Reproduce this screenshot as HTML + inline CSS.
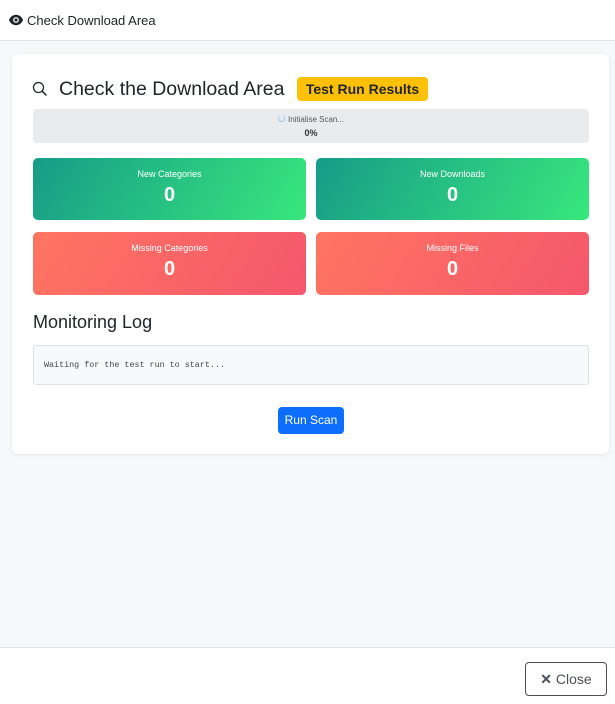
<!DOCTYPE html>
<html><head><meta charset="utf-8"><style>
*{box-sizing:border-box;margin:0;padding:0}
body{width:615px;height:704px;font-family:"Liberation Sans",sans-serif;background:#f7f8fa;position:relative;overflow:hidden;color:#212529}
.hdr{position:absolute;left:0;top:0;width:615px;height:41px;background:#fff;border-bottom:1px solid #dee2e6;font-size:13px;display:flex;align-items:center;padding-left:9px}
.card{position:absolute;left:12px;top:54px;width:597px;height:400px;background:#fff;border-radius:6px;box-shadow:0 1px 4px rgba(0,0,0,.08)}
.ab{position:absolute}
.stat{position:absolute;border-radius:5px;color:#fff;text-align:center}
.stat .l{font-size:9px;margin-top:11px}
.stat .v{font-size:20px;font-weight:bold;margin-top:5px}
.g{background:linear-gradient(120deg,#169c88,#38e77c)}
.r{background:linear-gradient(120deg,#ff7561,#f5576c)}
.ftr{position:absolute;left:0;top:647px;width:615px;height:57px;background:#fff;border-top:1px solid #dee2e6}
</style></head><body>
<div class="hdr"><svg width="14" height="12" viewBox="0 0 16 12" style="margin-right:4px"><path d="M8 0C4 0 1 3 0 6c1 3 4 6 8 6s7-3 8-6c-1-3-4-6-8-6z" fill="#212529"/><circle cx="8" cy="6" r="3.3" fill="#fff"/><circle cx="8" cy="6" r="1.8" fill="#212529"/></svg>Check Download Area</div>
<div class="card"></div>
<svg class="ab" style="left:32px;top:81px" width="16" height="16" viewBox="0 0 16 16"><circle cx="6.5" cy="6.5" r="5" fill="none" stroke="#212529" stroke-width="1.3"/><path d="M10.2 10.2L14.5 14.5" stroke="#212529" stroke-width="1.5"/></svg>
<div class="ab" style="left:59px;top:78px;font-size:19.5px">Check the Download Area</div>
<div class="ab" style="left:297px;top:77px;width:131px;height:24px;background:#ffc107;border-radius:4px;font-weight:bold;font-size:14px;line-height:25px;text-align:center">Test Run Results</div>
<div class="ab" style="left:33px;top:109px;width:556px;height:34px;background:#e9ecef;border-radius:4px;text-align:center;font-size:8px">
<div style="margin-top:6px;color:#555"><span style="display:inline-block;width:7px;height:7px;border:1px solid #9cc7ee;border-radius:50%;border-top-color:transparent;margin-right:3px"></span>Initialise Scan...</div>
<div style="margin-top:4px;font-size:9px;font-weight:bold;color:#333">0%</div></div>
<div class="stat g" style="left:33px;top:158px;width:273px;height:62px"><div class="l">New Categories</div><div class="v">0</div></div>
<div class="stat g" style="left:316px;top:158px;width:273px;height:62px"><div class="l">New Downloads</div><div class="v">0</div></div>
<div class="stat r" style="left:33px;top:232px;width:273px;height:63px"><div class="l">Missing Categories</div><div class="v">0</div></div>
<div class="stat r" style="left:316px;top:232px;width:273px;height:63px"><div class="l">Missing Files</div><div class="v">0</div></div>
<div class="ab" style="left:33px;top:312px;font-size:18px">Monitoring Log</div>
<div class="ab" style="left:33px;top:345px;width:556px;height:40px;background:#f8f9fa;border:1px solid #dee2e6;border-radius:3px;font-family:'Liberation Mono',monospace;font-size:8.4px;color:#444;padding:14px 10px">Waiting for the test run to start...</div>
<div class="ab" style="left:278px;top:407px;width:66px;height:27px;background:#0d6efd;border-radius:4px;color:#fff;font-size:12px;line-height:27px;text-align:center">Run Scan</div>
<div class="ftr"></div>
<div class="ab" style="left:525px;top:662px;width:82px;height:34px;border:1px solid #495057;border-radius:4px;color:#495057;font-size:14px;line-height:32px;text-align:center;background:#fff"><b>✕</b> Close</div>
</body></html>
